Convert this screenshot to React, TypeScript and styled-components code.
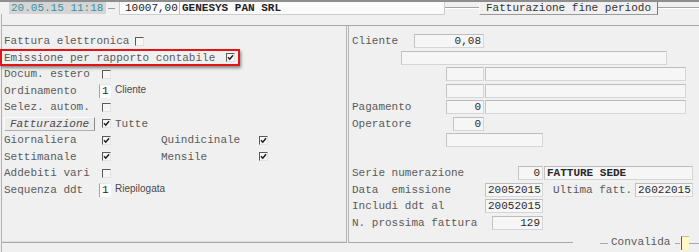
import React from "react";
import styled, { createGlobalStyle } from "styled-components";

const Global = createGlobalStyle`
  html, body { margin: 0; padding: 0; background: #f0f0f0; }
  body { font-family: "Liberation Mono", monospace; }
`;

const Screen = styled.div`
  position: relative;
  width: 699px;
  height: 252px;
  overflow: hidden;
  box-sizing: border-box;
  background: #f0f0f0;
  border-top: 2px solid #8e8e8e;
  font: 11px "Liberation Mono", "Courier New", monospace;
  color: #5a5a5a;
  display: flex;
  flex-direction: column;
`;

const Header = styled.div`
  display: flex;
  align-items: stretch;
  height: 12px;
  padding-left: 9px;
`;

const DateBox = styled.div`
  width: 97px;
  padding-left: 2px;
  box-sizing: border-box;
  background: #d5d5d5;
  color: #3a8fa3;
  line-height: 12px;
`;

const Dash = styled.div`
  align-self: center;
  width: 7px;
  height: 1px;
  margin: 0 4px 0 2px;
  background: #9a9a9a;
`;

const ClientField = styled.div`
  display: flex;
  width: 326px;
  height: 13px;
  box-sizing: border-box;
  background: #fbfbfb;
  border: 1px solid #cdcdcd;
  border-top: none;
  color: #222;
  line-height: 12px;
`;

const AmountCell = styled.div`
  width: 60px;
  padding-left: 5px;
  box-sizing: border-box;
  border-right: 1px solid #bdbdbd;
`;

const NameCell = styled.div`
  padding-left: 2px;
  font-weight: bold;
`;

const Groove = styled.div<{ $w?: number }>`
  align-self: center;
  ${(p) => (p.$w ? `width: ${p.$w}px;` : "flex: 1;")}
  height: 0;
  border-top: 1px solid #a4a4a4;
  border-bottom: 1px solid #ffffff;
`;

const TitleBox = styled.div`
  width: 179px;
  height: 13px;
  box-sizing: border-box;
  background: #f0f0f0;
  border: 1px solid #f8f8f8;
  border-right-color: #7a7a7a;
  border-bottom-color: #9a9a9a;
  border-top: none;
  color: #333;
  text-align: center;
  line-height: 12px;
`;

const Body = styled.div`
  flex: 1;
  margin-left: 1px;
  border-left: 1px solid #b0b0b0;
  padding-top: 11px;
`;

const Main = styled.div`
  display: flex;
  height: 218px;
  box-sizing: border-box;
  border-top: 1px solid #a8a8a8;
`;

const LeftPanel = styled.div`
  width: 345px;
  box-sizing: border-box;
  padding: 7px 0 0 2px;
  border-right: 1px solid #b4b4b4;
  border-bottom: 1px solid #a8a8a8;
  box-shadow: inset 0 -1px 0 #e0e0e0;
`;

const RightPanel = styled.div`
  flex: 1;
  margin-left: 1px;
  box-sizing: border-box;
  padding: 7px 0 0 3px;
  border-left: 1px solid #b4b4b4;
  border-bottom: 1px solid #a8a8a8;
`;

const Row = styled.div`
  display: flex;
  align-items: center;
  height: 16.5px;
  white-space: pre;
`;

const HighlightRow = styled(Row)`
  width: 240px;
  height: 17px;
  margin: -0.25px 0 -0.25px -4px;
  padding-left: 2px;
  box-sizing: border-box;
  border: 2px solid #e31414;
  box-shadow: 1px 2px 3px rgba(0, 0, 0, 0.45);
`;

const Label = styled.span<{ $w?: number; $ml?: number }>`
  display: inline-block;
  width: ${(p) => (p.$w ? `${p.$w}px` : "auto")};
  margin-left: ${(p) => p.$ml ?? 0}px;
  flex: none;
  overflow: hidden;
`;

const SansText = styled.span`
  margin-left: 4px;
  margin-top: -3px;
  font: 10px "Liberation Sans", Arial, sans-serif;
  color: #4a4a4a;
`;

const Indent = styled.span<{ $w: number }>`
  width: ${(p) => p.$w}px;
  flex: none;
`;

const Box = styled.span<{ $ml?: number }>`
  position: relative;
  display: inline-block;
  flex: none;
  width: 9px;
  height: 9px;
  margin-left: ${(p) => p.$ml ?? 0}px;
  box-sizing: border-box;
  background: #f6f6f6;
  border-top: 1px solid #5a5a5a;
  border-left: 1px solid #5a5a5a;
  border-right: 1px solid #e2e2e2;
  border-bottom: 1px solid #e2e2e2;
  svg { position: absolute; left: 0; top: 0; }
`;

const Check = ({ checked, ml }: { checked?: boolean; ml?: number }) => (
  <Box $ml={ml}>
    {checked && (
      <svg width="7" height="7" viewBox="0 0 7 7">
        <path d="M1 3.2 L2.8 5.2 L6 1.2" stroke="#1e1e1e" strokeWidth="1.5" fill="none" />
      </svg>
    )}
  </Box>
);

const Field = styled.span<{ $w: number; $align?: "left" | "right"; $bold?: boolean; $ml?: number }>`
  display: inline-block;
  flex: none;
  width: ${(p) => p.$w}px;
  height: 14px;
  margin-left: ${(p) => p.$ml ?? 0}px;
  box-sizing: border-box;
  padding: 0 2px;
  background: #f6f6f6;
  border: 1px solid #d6d6d6;
  border-top-color: #bdbdbd;
  border-left-color: #c4c4c4;
  color: #2a2a2a;
  text-align: ${(p) => p.$align ?? "right"};
  font-weight: ${(p) => (p.$bold ? "bold" : "normal")};
  line-height: 12px;
  overflow: hidden;
`;

const NumBox = styled.span`
  display: inline-block;
  flex: none;
  width: 12px;
  height: 14px;
  box-sizing: border-box;
  padding-left: 2px;
  background: #fbfbfb;
  border-left: 1px solid #a6a6a6;
  border-top: 1px solid #e6e6e6;
  color: #262626;
  line-height: 13px;
`;

const SideButton = styled.span`
  display: inline-block;
  flex: none;
  width: 91px;
  height: 14px;
  box-sizing: border-box;
  background: #ececec;
  border: 1px solid #fafafa;
  border-right-color: #8a8a8a;
  border-bottom-color: #b0b0b0;
  font-style: italic;
  color: #4a4a4a;
  text-align: center;
  line-height: 12px;
`;

const Convalida = styled.div`
  position: absolute;
  left: 573px;
  top: 233px;
  width: 126px;
  height: 15px;
  display: flex;
  align-items: center;
  background: #f0f0f0;
`;

const Segment = styled.span<{ $w?: number; $ml?: number }>`
  ${(p) => (p.$w ? `width: ${p.$w}px;` : "flex: 1;")}
  margin-left: ${(p) => p.$ml ?? 0}px;
  height: 1px;
  background: #a8a8a8;
  align-self: center;
  margin-top: 1px;
`;

const ConvalidaText = styled.span`
  margin-left: 3px;
  color: #5a5a5a;
  margin-top: -2px;
`;

const YellowBox = styled.span`
  width: 8px;
  height: 14px;
  margin-left: 1px;
  box-sizing: border-box;
  background: #fdf8c4;
  border-left: 1px solid #5a5a5a;
  border-top: 1px solid #bbb;
`;

export default function App() {
  return (
    <>
      <Global />
      <Screen>
        <Header>
          <DateBox>20.05.15 11:18</DateBox>
          <Dash />
          <ClientField>
            <AmountCell>10007,00</AmountCell>
            <NameCell>GENESYS PAN SRL</NameCell>
          </ClientField>
          <Groove $w={34} />
          <TitleBox>Fatturazione fine periodo</TitleBox>
          <Groove />
        </Header>
        <Body>
          <Main>
            <LeftPanel>
              <Row>
                <Label $w={131}>Fattura elettronica</Label>
                <Check />
              </Row>
              <HighlightRow>
                <Label $w={222}>Emissione per rapporto contabile</Label>
                <Check checked />
              </HighlightRow>
              <Row>
                <Label $w={98}>Docum. estero</Label>
                <Check />
              </Row>
              <Row>
                <Label $w={95}>Ordinamento</Label>
                <NumBox>1</NumBox>
                <SansText>Cliente</SansText>
              </Row>
              <Row>
                <Label $w={98}>Selez. autom.</Label>
                <Check />
              </Row>
              <Row>
                <SideButton>Fatturazione</SideButton>
                <Check checked ml={7} />
                <Label $ml={4}>Tutte</Label>
              </Row>
              <Row>
                <Label $w={98}>Giornaliera</Label>
                <Check checked />
                <Label $w={98} $ml={50}>Quindicinale</Label>
                <Check checked />
              </Row>
              <Row>
                <Label $w={98}>Settimanale</Label>
                <Check checked />
                <Label $w={98} $ml={50}>Mensile</Label>
                <Check checked />
              </Row>
              <Row>
                <Label $w={98}>Addebiti vari</Label>
                <Check />
              </Row>
              <Row>
                <Label $w={95}>Sequenza ddt</Label>
                <NumBox>1</NumBox>
                <SansText>Riepilogata</SansText>
              </Row>
            </LeftPanel>
            <RightPanel>
              <Row>
                <Label $w={62}>Cliente</Label>
                <Field $w={70}>0,08</Field>
              </Row>
              <Row>
                <Indent $w={49} />
                <Field $w={266} />
              </Row>
              <Row>
                <Indent $w={94} />
                <Field $w={38} />
                <Field $w={201} $ml={1} />
              </Row>
              <Row>
                <Indent $w={94} />
                <Field $w={38} />
                <Field $w={201} $ml={1} />
              </Row>
              <Row>
                <Label $w={94}>Pagamento</Label>
                <Field $w={38}>0</Field>
                <Field $w={201} $ml={1} />
              </Row>
              <Row>
                <Label $w={101}>Operatore</Label>
                <Field $w={31}>0</Field>
              </Row>
              <Row>
                <Indent $w={94} />
                <Field $w={97} />
              </Row>
              <Row />
              <Row>
                <Label $w={166}>Serie numerazione</Label>
                <Field $w={25}>0</Field>
                <Field $w={149} $ml={1} $align="left" $bold>FATTURE SEDE</Field>
              </Row>
              <Row>
                <Label $w={133}>Data  emissione</Label>
                <Field $w={58}>20052015</Field>
                <Label $w={82} $ml={10}>Ultima fatt.</Label>
                <Field $w={58}>26022015</Field>
              </Row>
              <Row>
                <Label $w={133}>Includi ddt al</Label>
                <Field $w={58}>20052015</Field>
              </Row>
              <Row>
                <Label $w={140}>N. prossima fattura</Label>
                <Field $w={51}>129</Field>
              </Row>
            </RightPanel>
          </Main>
        </Body>
        <Convalida>
          <Segment $w={8} $ml={27} />
          <ConvalidaText>Convalida</ConvalidaText>
          <Segment $w={5} $ml={5} />
          <YellowBox />
          <Segment />
        </Convalida>
      </Screen>
    </>
  );
}
